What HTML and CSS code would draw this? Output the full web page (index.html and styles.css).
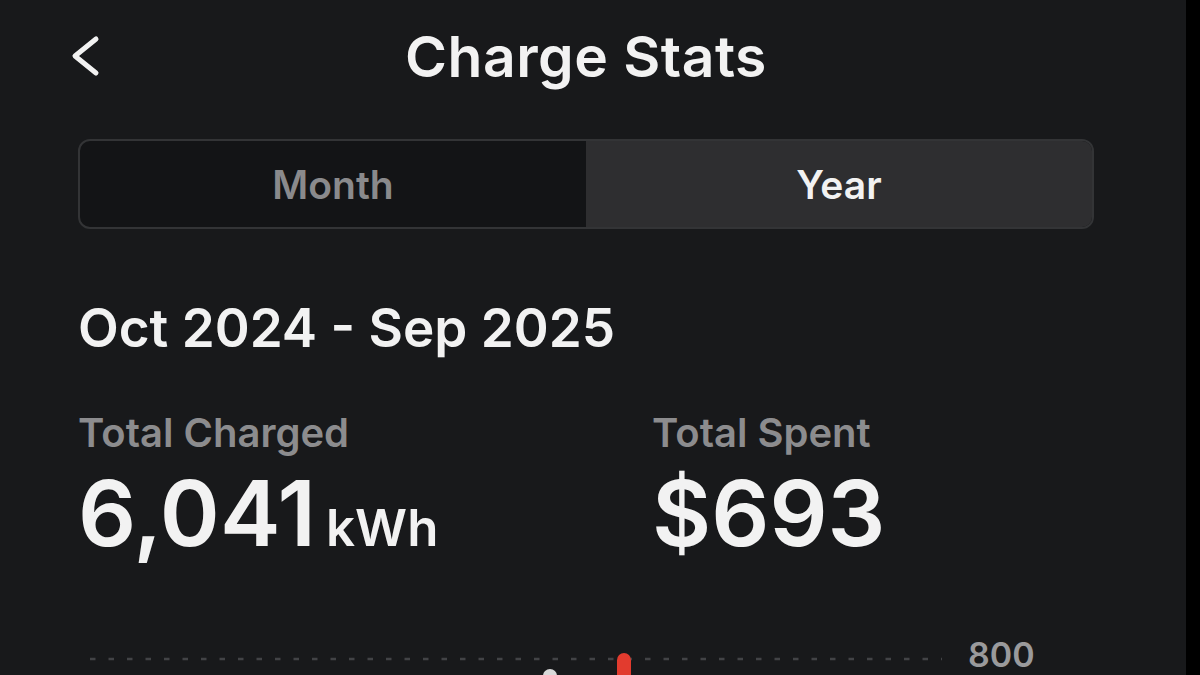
FILE: index.html
```html
<!DOCTYPE html>
<html lang="en">
<head>
    <meta charset="UTF-8">
    <meta name="viewport" content="width=device-width, initial-scale=1.0">
    <title>Charge Stats</title>
    <link rel="stylesheet" href="styles.css">
</head>
<body>
    <div class="screen">
        <div class="header">
            <div class="back">
                <svg width="30" height="44" viewBox="0 0 30 44">
                    <polyline points="26,5 5,22 26,39" fill="none" stroke="#f2f2f2" stroke-width="5" stroke-linecap="round" stroke-linejoin="round"/>
                </svg>
            </div>
            <h1>Charge Stats</h1>
            <div></div>
        </div>

        <div class="segmented">
            <div class="segment">Month</div>
            <div class="segment active">Year</div>
        </div>

        <h2 class="period">Oct 2024 - Sep 2025</h2>

        <div class="stats">
            <div class="stat">
                <div class="stat-label">Total Charged</div>
                <div class="stat-value">6,041<span class="unit">kWh</span></div>
            </div>
            <div class="stat">
                <div class="stat-label">Total Spent</div>
                <div class="stat-value">$693</div>
            </div>
        </div>

        <div class="chart">
            <svg width="868" height="60" viewBox="0 0 868 60">
                <line x1="12" y1="21" x2="864" y2="21" stroke="#424346" stroke-width="2.5" stroke-dasharray="5.5 13"/>
                <rect x="465" y="31" width="14" height="60" rx="7" fill="#d9d9d9"/>
                <rect x="539" y="15" width="14" height="60" rx="7" fill="#e23b2e"/>
            </svg>
            <div class="axis-label">800</div>
        </div>
    </div>
</body>
</html>
```

FILE: styles.css
```css
html, body {
    margin: 0;
    height: 100%;
}

body {
    background: #000;
    font-family: Inter, "Noto Sans", sans-serif;
    color: #f2f2f2;
    overflow: hidden;
}

.screen {
    width: 1186px;
    height: 675px;
    box-sizing: border-box;
    padding: 28px 92px 0 78px;
    background: #18191b;
    overflow: hidden;
}

.header {
    display: grid;
    grid-template-columns: 1fr auto 1fr;
    align-items: center;
    height: 56px;
}

.back {
    display: flex;
    align-items: center;
    margin-left: -8px;
    margin-top: -2px;
}

h1 {
    margin: 0;
    font-size: 57px;
    font-weight: 600;
    line-height: 1;
    letter-spacing: 0.5px;
}

.segmented {
    display: flex;
    margin-top: 55px;
    height: 90px;
    box-sizing: border-box;
    border: 2px solid #333436;
    border-radius: 12px;
    overflow: hidden;
    background: #131416;
}

.segment {
    flex: 1;
    display: flex;
    align-items: center;
    justify-content: center;
    font-size: 39px;
    font-weight: 600;
    color: #8a8a8c;
}

.segment.active {
    background: #2e2e30;
    color: #f2f2f2;
}

.period {
    margin: 73px 0 0;
    font-size: 53px;
    font-weight: 600;
    line-height: 1;
}

.stats {
    display: grid;
    grid-template-columns: 574px 1fr;
    margin-top: 58px;
}

.stat-label {
    font-size: 40px;
    font-weight: 600;
    line-height: 1;
    color: #8c8c8e;
}

.stat-value {
    margin-top: 15px;
    font-size: 91px;
    font-weight: 600;
    line-height: 1;
}

.unit {
    margin-left: 10px;
    font-size: 51px;
}

.chart {
    display: flex;
    align-items: flex-start;
    margin-top: 79px;
}

.chart svg {
    display: block;
    flex: none;
}

.axis-label {
    margin-left: 22px;
    font-size: 34px;
    font-weight: 600;
    line-height: 1;
    color: #9a9a9c;
}
```
